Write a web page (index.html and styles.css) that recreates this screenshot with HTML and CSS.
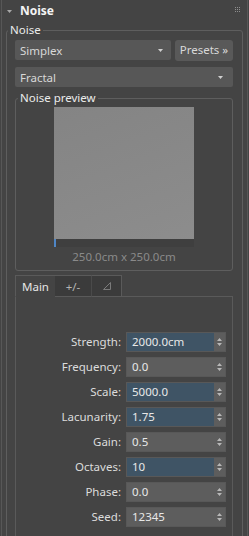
FILE: index.html
```html
<!DOCTYPE html>
<html>
<head>
<meta charset="utf-8">
<link rel="stylesheet" href="styles.css">
</head>
<body>
<div class="rollout">
  <div class="rollout-head">
    <svg class="caret" width="5" height="3" viewBox="0 0 5 3"><path d="M0 0H5L2.5 3Z" fill="#a8a8a8"/></svg>
    <span class="title">Noise</span>
    <svg class="grip" width="5" height="5" viewBox="0 0 5 5" fill="#8e8e8e">
      <rect x="0" y="0" width="1" height="1"/><rect x="2" y="0" width="1" height="1"/><rect x="4" y="0" width="1" height="1"/>
      <rect x="0" y="2" width="1" height="1"/><rect x="2" y="2" width="1" height="1"/><rect x="4" y="2" width="1" height="1"/>
      <rect x="0" y="4" width="1" height="1"/><rect x="2" y="4" width="1" height="1"/><rect x="4" y="4" width="1" height="1"/>
    </svg>
  </div>

  <fieldset class="group group-noise">
    <legend>Noise</legend>
    <div class="group-body">
      <div class="row">
        <div class="dropdown grow"><span>Simplex</span><svg class="dd-arrow" width="5" height="3" viewBox="0 0 5 3"><path d="M0 0H5L2.5 3Z" fill="#d0d0d0"/></svg></div>
        <div class="btn">Presets »</div>
      </div>
      <div class="dropdown fractal"><span>Fractal</span><svg class="dd-arrow" width="5" height="3" viewBox="0 0 5 3"><path d="M0 0H5L2.5 3Z" fill="#d0d0d0"/></svg></div>

      <fieldset class="group group-preview">
        <legend>Noise preview</legend>
        <div class="preview-body">
          <div class="preview">
            <div class="bar"><div class="progress"></div></div>
          </div>
          <div class="size">250.0cm x 250.0cm</div>
        </div>
      </fieldset>

      <div class="tabs">
        <div class="tab active">Main</div>
        <div class="tab">+/-</div>
        <div class="tab tri"><svg width="8" height="8" viewBox="0 0 8 8"><path d="M0.5 7.5H7.5V0.5Z" fill="none" stroke="#7a7a7a" stroke-width="1"/></svg></div>
        <div class="tab-fill"></div>
      </div>

      <div class="pane">
        <div class="fields">
          <div class="lbl">Strength:</div>
          <div class="spinner hl"><span class="val">2000.0cm</span><span class="spin"><svg width="5" height="8" viewBox="0 0 5 8"><path d="M0 3H5L2.5 0Z M0 5H5L2.5 8Z" fill="#b8b8b8"/></svg></span></div>
          <div class="lbl">Frequency:</div>
          <div class="spinner"><span class="val">0.0</span><span class="spin"><svg width="5" height="8" viewBox="0 0 5 8"><path d="M0 3H5L2.5 0Z M0 5H5L2.5 8Z" fill="#b8b8b8"/></svg></span></div>
          <div class="lbl">Scale:</div>
          <div class="spinner hl"><span class="val">5000.0</span><span class="spin"><svg width="5" height="8" viewBox="0 0 5 8"><path d="M0 3H5L2.5 0Z M0 5H5L2.5 8Z" fill="#b8b8b8"/></svg></span></div>
          <div class="lbl">Lacunarity:</div>
          <div class="spinner hl"><span class="val">1.75</span><span class="spin"><svg width="5" height="8" viewBox="0 0 5 8"><path d="M0 3H5L2.5 0Z M0 5H5L2.5 8Z" fill="#b8b8b8"/></svg></span></div>
          <div class="lbl">Gain:</div>
          <div class="spinner"><span class="val">0.5</span><span class="spin"><svg width="5" height="8" viewBox="0 0 5 8"><path d="M0 3H5L2.5 0Z M0 5H5L2.5 8Z" fill="#b8b8b8"/></svg></span></div>
          <div class="lbl">Octaves:</div>
          <div class="spinner hl"><span class="val">10</span><span class="spin"><svg width="5" height="8" viewBox="0 0 5 8"><path d="M0 3H5L2.5 0Z M0 5H5L2.5 8Z" fill="#b8b8b8"/></svg></span></div>
          <div class="lbl">Phase:</div>
          <div class="spinner"><span class="val">0.0</span><span class="spin"><svg width="5" height="8" viewBox="0 0 5 8"><path d="M0 3H5L2.5 0Z M0 5H5L2.5 8Z" fill="#b8b8b8"/></svg></span></div>
          <div class="lbl">Seed:</div>
          <div class="spinner"><span class="val">12345</span><span class="spin"><svg width="5" height="8" viewBox="0 0 5 8"><path d="M0 3H5L2.5 0Z M0 5H5L2.5 8Z" fill="#b8b8b8"/></svg></span></div>
        </div>
      </div>
    </div>
  </fieldset>
</div>
</body>
</html>
```

FILE: styles.css
```css
* { box-sizing: border-box; }
html, body { margin: 0; padding: 0; background: #444444; }
body {
  width: 249px;
  height: 536px;
  overflow: hidden;
  font-family: "Noto Sans", "Open Sans", sans-serif;
  font-size: 11.5px;
  color: #dcdcdc;
}
.rollout {
  height: 536px;
  margin: 0 1px;
  border-left: 1px solid #575757;
  border-right: 1px solid #575757;
}
.rollout-head {
  height: 22px;
  display: flex;
  align-items: center;
  padding: 0 7px 0 5px;
}
.caret { display: block; margin-right: 8px; margin-top: 1px; }
.title { flex: 1; font-weight: 700; font-size: 12px; color: #f4f4f4; line-height: 16px; }
.grip { display: block; margin-top: -4px; }

.group {
  margin: 0 4px;
  padding: 0;
  border: 1px solid #5e5e5e;
  border-radius: 3px;
  min-width: 0;
}
.group legend {
  margin-left: 1px;
  padding: 0 2px;
  line-height: 16px;
  color: #ececec;
}
.group-body { padding: 2px 9px 0 8px; }

.row { display: flex; gap: 4px; }
.grow { flex: 1; }
.dropdown {
  height: 20px;
  display: flex;
  align-items: center;
  justify-content: space-between;
  padding: 0 8px 0 5px;
  background: #575757;
  border-radius: 2px;
  color: #d8d8d8;
}
.dd-arrow { display: block; }
.fractal { margin-top: 6px; padding-right: 10px; }
.btn {
  width: 58px;
  height: 21px;
  line-height: 20px;
  background: #595959;
  border-radius: 3px;
  text-align: center;
  color: #d8d8d8;
}

.group-preview { margin: 3px 0 0 0; }
.group-preview legend { margin-left: 2px; }
.preview-body { padding: 1px 0 5px; display: flex; flex-direction: column; align-items: center; }
.preview {
  width: 140px;
  height: 140px;
  background: linear-gradient(160deg, #848484, #8d8d8d);
  display: flex;
  flex-direction: column;
  justify-content: flex-end;
}
.bar { height: 8px; background: #3f3f3f; }
.progress { width: 2px; height: 8px; background: #4f86c6; }
.size { margin-top: 2px; line-height: 16px; color: #8a8a8a; }

.tabs { display: flex; height: 22px; margin-top: 4px; }
.tab {
  height: 22px;
  line-height: 21px;
  text-align: center;
  border-top: 1px solid #5a5a5a;
  border-bottom: 1px solid #5a5a5a;
  background: #3b3b3b;
  color: #b4b4b4;
}
.tab.active {
  width: 40px;
  background: #444444;
  border-left: 1px solid #5a5a5a;
  border-bottom-color: transparent;
  color: #e4e4e4;
}
.tab:nth-child(2) { width: 37px; border-right: 1px solid #4a4a4a; }
.tab.tri { width: 30px; border-right: 1px solid #5a5a5a; display: flex; align-items: center; justify-content: center; }
.tab-fill { flex: 1; border-bottom: 1px solid #5a5a5a; }

.pane {
  height: 260px;
  padding: 35px 5px 0 0;
  border: 1px solid #5a5a5a;
  border-top: none;
}
.fields {
  display: grid;
  grid-template-columns: 105px 100px;
  grid-auto-rows: 20px;
  column-gap: 5px;
  row-gap: 5px;
}
.lbl { text-align: right; line-height: 20px; color: #dcdcdc; }
.spinner {
  display: flex;
  background: #5d5d5d;
  border: 1px solid #585858;
}
.val {
  flex: 1;
  padding-left: 5px;
  line-height: 18px;
  color: #e8e8e8;
}
.spinner.hl .val { background: #3f5465; }
.spin { width: 11px; display: flex; align-items: center; justify-content: center; }
.spin svg { display: block; }
```
